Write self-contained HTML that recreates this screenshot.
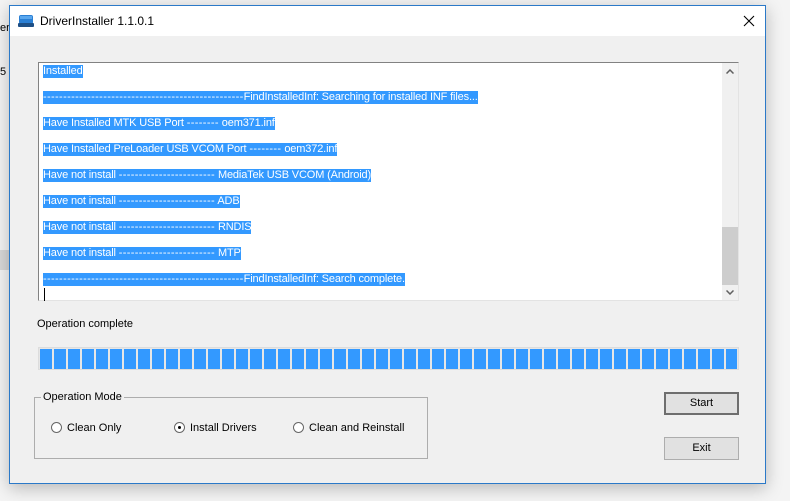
<!DOCTYPE html>
<html><head><style>
*{margin:0;padding:0;box-sizing:border-box}
body{width:790px;height:501px;background:#f4f4f4;position:relative;overflow:hidden;font-family:"Liberation Sans",sans-serif;font-size:11px;color:#000}
.abs{position:absolute}
#win{left:9px;top:5px;width:757px;height:479px;border:1px solid #2b79c8;background:#f0f0f0;box-shadow:0 4px 16px rgba(0,0,0,.25)}
#title{left:0;top:0;width:755px;height:30px;background:#fff}
#tb{left:28px;top:56px;width:701px;height:239px;background:#fff;border-top:1px solid #828282;border-left:1px solid #828282;border-right:1px solid #e3e3e3;border-bottom:1px solid #e3e3e3}
.ln{position:absolute;left:4px;height:13px;line-height:13px;background:#3399ff;color:#fff;white-space:nowrap;font-size:11px;letter-spacing:-0.15px}
.d{letter-spacing:0.35px}
#sb{left:683px;top:0;width:16px;height:237px;background:#f0f0f0}
#pb{left:28px;top:341px;width:701px;height:23px;border:1px solid #dcdcdc;background:#e6e6e6}
.btn{position:absolute;width:75px;height:23px;background:#e1e1e1;border:1px solid #adadad;text-align:center;line-height:21px;font-size:11px}
.rad{position:absolute;width:11px;height:11px;border-radius:50%;border:1px solid #666;background:#fff}
</style></head><body>
<div class="abs" style="left:0;top:22px;font-size:11px">er_</div>
<div class="abs" style="left:0;top:66px;font-size:11px">5</div>
<div class="abs" style="left:0;top:250px;width:9px;height:20px;background:#d8d8d8"></div>
<div id="win" class="abs">
 <div id="title" class="abs">
  <svg class="abs" style="left:8px;top:8px" width="16" height="14" viewBox="0 0 16 14"><rect x="1" y="1" width="14" height="9" rx="2" fill="#2a7fd4"/><rect x="0" y="9" width="16" height="4" rx="1" fill="#1d4f86"/><rect x="2" y="2" width="12" height="3" fill="#5aa7ee"/></svg>
  <div class="abs" style="left:30px;top:8px;font-size:12px">DriverInstaller 1.1.0.1</div>
  <svg class="abs" style="left:733px;top:9px" width="12" height="12" viewBox="0 0 12 12"><path d="M1 1L11 11M11 1L1 11" stroke="#000" stroke-width="1.1"/></svg>
 </div>
 <div id="tb" class="abs">
  <div class="ln" style="top:2px">Installed</div>
  <div class="ln" style="top:28px"><span class="d">--------------------------------------------------</span>FindInstalledInf: Searching for installed INF files...</div>
  <div class="ln" style="top:54px">Have Installed MTK USB Port <span class="d">--------</span> oem371.inf</div>
  <div class="ln" style="top:80px">Have Installed PreLoader USB VCOM Port <span class="d">--------</span> oem372.inf</div>
  <div class="ln" style="top:106px">Have not install <span class="d">------------------------</span> MediaTek USB VCOM (Android)</div>
  <div class="ln" style="top:132px">Have not install <span class="d">------------------------</span> ADB</div>
  <div class="ln" style="top:158px">Have not install <span class="d">------------------------</span> RNDIS</div>
  <div class="ln" style="top:184px">Have not install <span class="d">------------------------</span> MTP</div>
  <div class="ln" style="top:210px"><span class="d">--------------------------------------------------</span>FindInstalledInf: Search complete.</div>
  <div class="abs" style="left:5px;top:225px;width:1px;height:13px;background:#000"></div>
  <div id="sb" class="abs">
   <svg class="abs" style="left:4px;top:6px" width="8" height="5"><path d="M0.5 4.5L4 1L7.5 4.5" stroke="#606060" stroke-width="1.5" fill="none"/></svg>
   <div class="abs" style="left:0;top:164px;width:16px;height:58px;background:#cdcdcd"></div>
   <svg class="abs" style="left:4px;top:227px" width="8" height="5"><path d="M0.5 0.5L4 4L7.5 0.5" stroke="#606060" stroke-width="1.5" fill="none"/></svg>
  </div>
 </div>
 <div class="abs" style="left:27px;top:312px;font-size:11px">Operation complete</div>
 <div id="pb" class="abs">
  <svg class="abs" style="left:1px;top:1px" width="698" height="20">
   <defs><pattern id="p" width="14" height="20" patternUnits="userSpaceOnUse"><rect x="0" y="0" width="12" height="20" fill="#3399ff"/></pattern></defs>
   <rect x="0" y="0" width="697" height="20" fill="url(#p)"/>
  </svg>
 </div>
 <div class="abs" style="left:24px;top:391px;width:394px;height:62px;border:1px solid #adadad"></div>
 <div class="abs" style="left:31px;top:385px;background:#f0f0f0;padding:0 2px;font-size:11px">Operation Mode</div>
 <div class="rad" style="left:41px;top:416px"></div>
 <div class="abs" style="left:57px;top:416px">Clean Only</div>
 <div class="rad" style="left:164px;top:416px"><div class="abs" style="left:3px;top:3px;width:3px;height:3px;background:#000;border-radius:50%"></div></div>
 <div class="abs" style="left:180px;top:416px">Install Drivers</div>
 <div class="rad" style="left:283px;top:416px"></div>
 <div class="abs" style="left:299px;top:416px">Clean and Reinstall</div>
 <div class="btn" style="left:654px;top:386px;border:2px solid #6e6e6e;line-height:19px">Start</div>
 <div class="btn" style="left:654px;top:431px">Exit</div>
</div>
</body></html>
